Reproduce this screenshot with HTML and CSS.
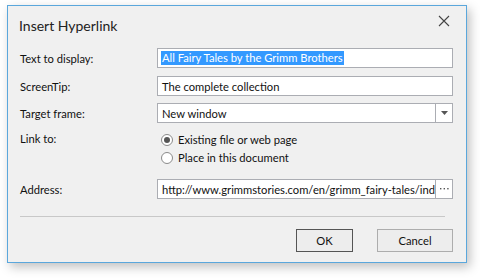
FILE: index.html
```html
<!DOCTYPE html>
<html>
<head>
<meta charset="utf-8">
<link rel="stylesheet" href="styles.css">
</head>
<body>
<div class="dialog">
  <div class="titlebar">
    <span class="title">Insert Hyperlink</span>
    <svg class="close" width="12" height="12" viewBox="0 0 12 12"><path d="M1 1 L11 11 M11 1 L1 11" stroke="#444" stroke-width="1.1" fill="none"/></svg>
  </div>
  <div class="form">
    <div class="row r1">
      <span class="label">Text to display:</span>
      <div class="field"><span class="sel">All Fairy Tales by the Grimm Brothers</span></div>
    </div>
    <div class="row r2">
      <span class="label">ScreenTip:</span>
      <div class="field">The complete collection</div>
    </div>
    <div class="row r3">
      <span class="label">Target frame:</span>
      <div class="field combo"><span class="val">New window</span><span class="btn"><svg width="7" height="4" viewBox="0 0 7 4"><path d="M0 0 H7 L3.5 4 Z" fill="#555"/></svg></span></div>
    </div>
    <div class="row r4">
      <span class="label">Link to:</span>
      <div class="radios">
        <div class="radio"><span class="circle checked"></span>Existing file or web page</div>
        <div class="radio"><span class="circle"></span>Place in this document</div>
      </div>
    </div>
    <div class="row r5">
      <span class="label">Address:</span>
      <div class="field combo"><span class="val">http://www.grimmstories.com/en/grimm_fairy-tales/index</span><span class="btn"><svg width="9" height="2" viewBox="0 0 9 2"><rect x="0" y="0" width="1.4" height="1.4" fill="#555"/><rect x="3.6" y="0" width="1.4" height="1.4" fill="#555"/><rect x="7.2" y="0" width="1.4" height="1.4" fill="#555"/></svg></span></div>
    </div>
  </div>
  <div class="sep"></div>
  <div class="buttons">
    <div class="button ok">OK</div>
    <div class="button">Cancel</div>
  </div>
</div>
</body>
</html>
```
FILE: styles.css
```css
html, body { margin: 0; padding: 0; background: #ffffff; }
body { width: 480px; height: 279px; overflow: hidden; font-family: "Lato", "Open Sans", sans-serif; font-size: 11.2px; color: #111; }
.dialog {
  margin: 5px 0 0 7px;
  width: 458px; height: 256px;
  border: 1px solid #5aa7dc;
  background: #f0f0f0;
  box-shadow: 3px 4px 10px rgba(0,0,0,0.25);
  display: flex; flex-direction: column;
}
.titlebar { height: 42px; display: flex; align-items: flex-start; justify-content: space-between; }
.title { font-size: 14px; margin: 11px 0 0 11px; color: #222; }
.close { margin: 9px 16px 0 0; }
.form { display: flex; flex-direction: column; }
.row { display: grid; grid-template-columns: 149px 296px; align-items: center; }
.label { padding-left: 12px; }
.r2 { margin-top: 8px; }
.r3 { margin-top: 7px; }
.r4 { margin-top: 8px; align-items: start; }
.r4 .label { margin-top: 1px; }
.r5 { margin-top: 13px; }
.field {
  height: 18px; border: 1px solid #abadb3; background: #fff;
  display: flex; align-items: center; padding-left: 4px; white-space: nowrap; overflow: hidden;
}
.sel { background: #3399ff; color: #fff; line-height: 14px; padding: 0 1px 0 1px; margin-left: -1px; }
.combo { padding-left: 0; }
.combo .val { flex: 1; padding-left: 4px; overflow: hidden; white-space: nowrap; }
.combo .btn { width: 16px; height: 18px; border-left: 1px solid #abadb3; display: flex; align-items: center; justify-content: center; flex: none; background: #fff; }
.radios { display: flex; flex-direction: column; gap: 1px; }
.radio { display: flex; align-items: center; height: 17px; }
.circle {
  width: 12px; height: 12px; box-sizing: border-box; border: 1px solid #8a8a8a; border-radius: 50%; background: #fff;
  margin: 0 5px 0 4px; display: flex; align-items: center; justify-content: center;
}
.circle.checked::after { content: ""; width: 6px; height: 6px; border-radius: 50%; background: #555; }
.sep { margin: 17px 0 0 12px; width: 425px; height: 1px; background: #c8c8c8; }
.buttons { display: flex; justify-content: flex-end; gap: 24px; margin: 12px 13px 0 0; }
.button {
  height: 21px; border: 1px solid #adadad; background: #ededed;
  display: flex; align-items: center; justify-content: center; width: 74px;
}
.button.ok { width: 55px; border-color: #555; }
```
